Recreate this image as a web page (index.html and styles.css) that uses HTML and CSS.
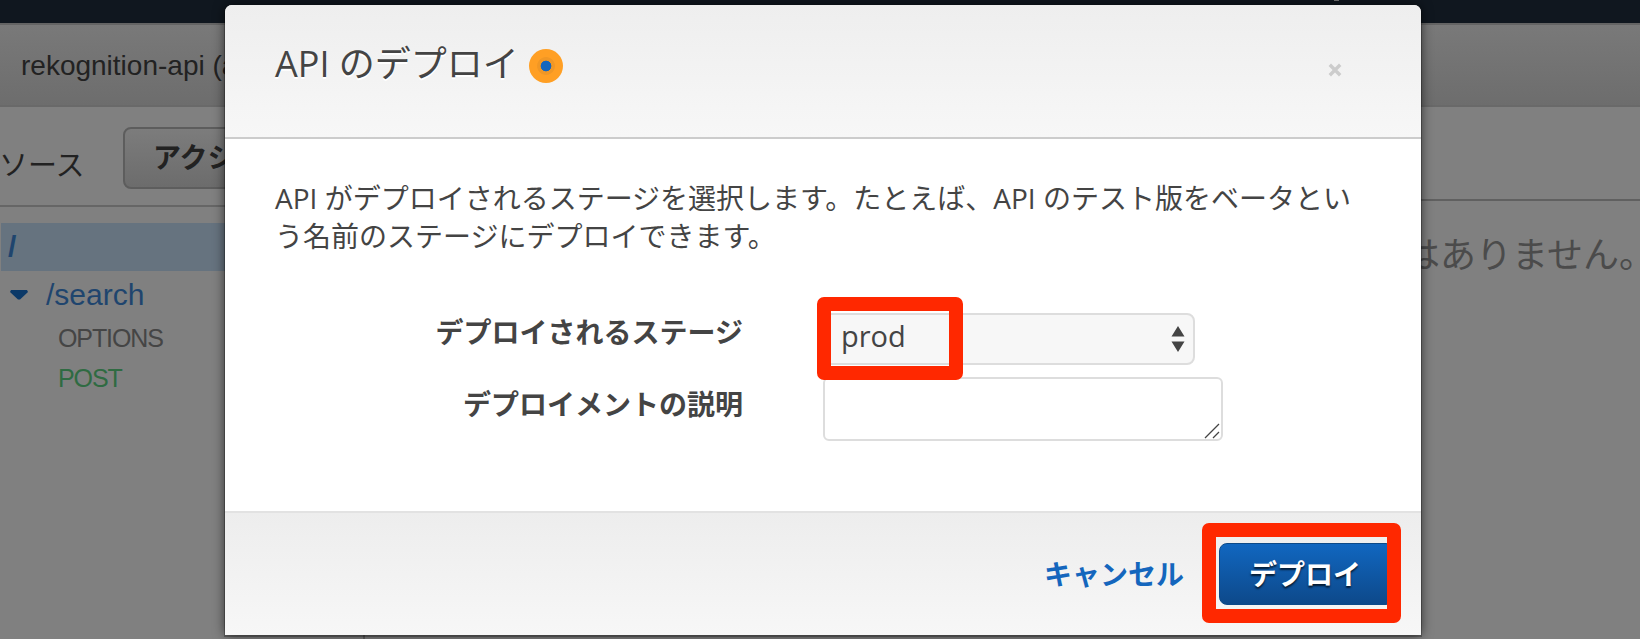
FILE: index.html
```html
<!DOCTYPE html>
<html lang="ja">
<head>
<meta charset="utf-8">
<title>API のデプロイ</title>
<link rel="stylesheet" href="styles.css">
</head>
<body>
<div class="page">
  <div class="topbar"><span class="topbar-mark"></span></div>
  <div class="crumbs">rekognition-api (a</div>
  <div class="columns">
    <aside class="sidebar">
      <div class="toolbar">
        <span class="toolbar-title">ソース</span>
        <button class="action" type="button">アクション</button>
      </div>
      <div class="tree">
        <div class="node root">/</div>
        <div class="node search"><svg class="caret" viewBox="0 0 18 10"><path d="M1 0H17L18 2L10 9.5H8L0 2Z"/></svg><span>/search</span></div>
        <div class="verb">OPTIONS</div>
        <div class="verb post">POST</div>
      </div>
    </aside>
    <main class="content">
      <div class="content-head"></div>
      <p class="empty">はありません。</p>
    </main>
  </div>
</div>

<section class="modal">
  <header class="modal-head">
    <h1>API のデプロイ</h1>
    <span class="beacon"></span>
    <svg class="close" viewBox="0 0 14 14"><path d="M1.8 1.8L12.2 12.2M12.2 1.8L1.8 12.2"/></svg>
  </header>
  <div class="modal-body">
    <p class="intro"><span class="line">API がデプロイされるステージを選択します。たとえば、API のテスト版をベータとい</span><span class="line">う名前のステージにデプロイできます。</span></p>
    <div class="form">
      <label class="label">デプロイされるステージ</label>
      <div class="select"><span>prod</span><svg class="arrows" viewBox="0 0 14 26"><path d="M7 0L13.5 10.5H.5ZM7 26L.5 15.5H13.5Z"/></svg><i class="mark mark-stage"></i></div>
      <label class="label desc">デプロイメントの説明</label>
      <div class="textarea"><svg class="grip" viewBox="0 0 16 16"><path d="M1 15L15 1M9 15L15 9"/></svg></div>
    </div>
  </div>
  <footer class="modal-foot">
    <a class="cancel">キャンセル</a>
    <div class="submit"><button class="deploy" type="button">デプロイ</button><i class="mark mark-deploy"></i></div>
  </footer>
</section>
</body>
</html>
```
FILE: styles.css
```css
* { box-sizing: border-box; }
body {
  margin: 0;
  width: 1640px;
  height: 639px;
  overflow: hidden;
  position: relative;
  background: #808080;
  color: #444;
  font-family: "Open Sans", "Noto Sans CJK JP", sans-serif;
}
.topbar { height: 23px; background: #10171f; padding-left: 1334px; }
.topbar-mark { display: block; width: 5px; height: 1px; background: #777; }
.crumbs {
  height: 84px;
  padding-left: 21px;
  border-top: 2px solid #646464;
  border-bottom: 2px solid #696969;
  background: linear-gradient(#797979, #6d6d6d);
  color: #222;
  font: 28px/82px "Liberation Sans", sans-serif;
  white-space: nowrap;
}
.columns { display: flex; height: 532px; }
.sidebar { flex: none; width: 365px; border-right: 2px solid #606060; }
.toolbar {
  height: 100px;
  border-bottom: 2px solid #666;
  display: flex;
  color: #222;
}
.toolbar-title { flex: none; width: 124px; margin-left: -1px; padding-top: 37px; font-size: 29px; line-height: 42px; }
.action {
  flex: none;
  width: 220px;
  height: 62px;
  margin-top: 20px;
  padding: 0 0 2px 28px;
  border: 2px solid #5d5d5d;
  border-radius: 8px;
  background: linear-gradient(#7c7c7c, #6c6c6c);
  color: #222;
  font: bold 28px/40px "Open Sans", "Noto Sans CJK JP", sans-serif;
  text-align: left;
}
.tree { padding: 16px 0 0 1px; font-family: "Liberation Sans", sans-serif; }
.node { height: 48px; font-size: 30px; line-height: 48px; color: #1f456e; }
.root { padding-left: 7px; background: #66737f; font-weight: bold; }
.search { display: flex; padding-left: 9px; }
.caret { width: 18px; height: 10px; margin: 19px 18px 0 0; fill: #0b3968; }
.verb { height: 40px; padding-left: 57px; font-size: 25px; line-height: 38px; letter-spacing: -1.1px; color: #454545; }
.post { color: #2f6b42; }
.content { flex: none; width: 1275px; }
.content-head { height: 94px; border-bottom: 2px solid #606060; }
.empty { margin: 27px 0 0 1039px; font-size: 36px; line-height: 54px; color: #4b4b4b; white-space: nowrap; }

.modal {
  position: absolute;
  left: 225px;
  top: 5px;
  width: 1196px;
  height: 630px;
  border-radius: 7px 7px 0 0;
  background: #fff;
  box-shadow: 0 1px 0 1px rgba(0, 0, 0, .25), 0 0 12px rgba(0, 0, 0, .65);
}
.modal-head {
  display: flex;
  height: 134px;
  padding: 0 79px 0 50px;
  border-bottom: 2px solid #ccc;
  border-radius: 7px 7px 0 0;
  background: linear-gradient(#eee, #f7f7f7);
}
h1 { margin: 34px 0 0; width: 254px; font-size: 36px; line-height: 50px; font-weight: 400; white-space: nowrap; text-shadow: 0 2px #fff; }
.beacon {
  width: 34px;
  height: 34px;
  margin-top: 44px;
  border-radius: 50%;
  background: radial-gradient(circle, #1466bd 0 5px, #f19725 5.7px 8.5px, #ff9f24 9.3px);
}
.close { width: 14px; height: 14px; margin: 58px 0 0 auto; fill: none; stroke: #ccc; stroke-width: 3.4; }
.modal-body { height: 372px; padding: 40px 50px 0; }
.intro { margin: 0; font-size: 28px; line-height: 38px; }
.line { display: block; white-space: nowrap; }
.form { display: grid; grid-template-columns: 468px 400px; column-gap: 80px; margin-top: 58px; }
.label { height: 64px; font-size: 28px; line-height: 38px; font-weight: 700; text-align: right; white-space: nowrap; }
.desc { padding-top: 8px; }
.select {
  position: relative;
  display: flex;
  justify-content: space-between;
  width: 372px;
  height: 52px;
  padding: 0 8px 0 16px;
  border: 2px solid #ddd;
  border-radius: 8px;
  background: #f7f7f7;
  font-size: 29px;
  line-height: 41px;
}
.arrows { width: 14px; height: 26px; margin-top: 11px; fill: #444; }
.textarea { display: flex; height: 64px; border: 2px solid #ddd; border-radius: 6px; justify-content: flex-end; align-items: flex-end; }
.grip { width: 16px; height: 16px; margin: 0 1px 0 0; fill: none; stroke: #444; stroke-width: 1.3; }
.mark { position: absolute; border: 14px solid #ff2800; border-radius: 7px; }
.mark-stage { left: -8px; top: -18px; width: 146px; height: 83px; }
.modal-foot {
  display: flex;
  height: 124px;
  padding-left: 819px;
  border-top: 2px solid #e2e2e2;
  background: linear-gradient(#ededed, #f7f7f7);
}
.cancel { width: 175px; padding-top: 41px; font-size: 28px; line-height: 40px; font-weight: 700; color: #1466bd; }
.submit { position: relative; margin-top: 30px; }
.deploy {
  display: block;
  width: 175px;
  height: 62px;
  padding: 0 3px 0 0;
  border: 1px solid #0d4a88;
  border-radius: 8px;
  background: linear-gradient(#1167c0, #0d498a);
  color: #fff;
  font: bold 28px/40px "Open Sans", "Noto Sans CJK JP", sans-serif;
  text-shadow: 0 2px 2px rgba(0, 0, 0, .7);
}
.mark-deploy { left: -17px; top: -20px; width: 199px; height: 100px; }
```
